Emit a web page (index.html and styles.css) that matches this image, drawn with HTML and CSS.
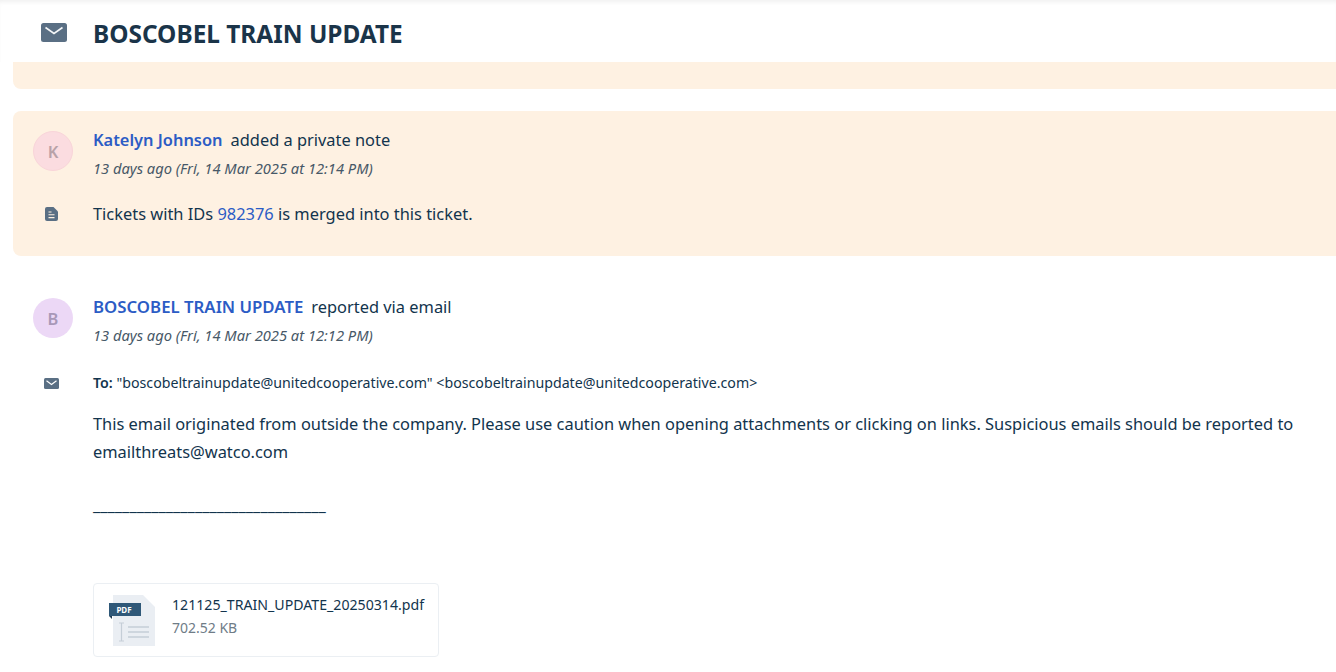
FILE: index.html
```html
<!DOCTYPE html>
<html lang="en">
<head>
<meta charset="utf-8">
<title>BOSCOBEL TRAIN UPDATE</title>
<link rel="stylesheet" href="styles.css">
</head>
<body>
<header class="head">
  <svg class="head-icon" width="26" height="19" viewBox="0 0 26 19"><rect width="26" height="19" rx="2.5" fill="#5a6f84"/><path d="M4.500 4.500 13 10.500l8.500-6" fill="none" stroke="#f4f6f8" stroke-width="1.600"/></svg>
  <h1 class="title">BOSCOBEL TRAIN UPDATE</h1>
</header>
<div class="stub"></div>
<section class="card note">
  <div class="row meta">
    <div class="gutter"><div class="avatar avatar-k">K</div></div>
    <div>
      <div class="who"><a class="name">Katelyn Johnson</a><span class="act">added a private note</span></div>
      <div class="time">13 days ago (Fri, 14 Mar 2025 at 12:14 PM)</div>
    </div>
  </div>
  <div class="row line-note">
    <div class="gutter"><svg class="small-icon" width="13" height="14" viewBox="0 0 13 14"><path d="M2 0H8.500L13 4.500V12a2 2 0 0 1-2 2H2a2 2 0 0 1-2-2V2a2 2 0 0 1 2-2z" fill="#5a6f84"/><path d="M3.500 5h3M3.500 7.800h6M3.500 10.600h6" stroke="#fef1e2" stroke-width="1.100"/></svg></div>
    <p class="text">Tickets with IDs <a class="link">982376</a> is merged into this ticket.</p>
  </div>
</section>
<section class="card mail">
  <div class="row meta">
    <div class="gutter"><div class="avatar avatar-b">B</div></div>
    <div>
      <div class="who"><a class="name name-caps">BOSCOBEL TRAIN UPDATE</a><span class="act">reported via email</span></div>
      <div class="time">13 days ago (Fri, 14 Mar 2025 at 12:12 PM)</div>
    </div>
  </div>
  <div class="row line-to">
    <div class="gutter"><svg class="small-icon" width="15" height="11" viewBox="0 0 15 11"><rect width="15" height="11" rx="1.500" fill="#5a6f84"/><path d="M2.500 2.800 7.500 6.500l5-3.700" fill="none" stroke="#fff" stroke-width="1.200"/></svg></div>
    <div class="to"><b>To:</b> "boscobeltrainupdate@unitedcooperative.com" &lt;boscobeltrainupdate@unitedcooperative.com&gt;</div>
  </div>
  <div class="body-text">
    <p class="text para">This email originated from outside the company. Please use caution when opening attachments or clicking on links. Suspicious emails should be reported to emailthreats@watco.com</p>
    <div class="rule">________________________________</div>
    <div class="file">
      <svg class="file-icon" width="46" height="51" viewBox="0 0 46 51"><path d="M4 0h30l12 12v39H4z" fill="#eaeef3"/><path d="M0 8h32v13H0z" fill="#2f5878"/><path d="M0 21h3v3z" fill="#1d3a52"/><text x="15" y="18" class="pdf">PDF</text><path d="M10 28h5M12.500 28v18M10 46h5" stroke="#c5ced7" stroke-width="1.200" fill="none"/><path d="M19 32h21M19 37h21M19 42h21" stroke="#c5ced7" stroke-width="1.300"/></svg>
      <div class="file-info">
        <div class="file-name">121125_TRAIN_UPDATE_20250314.pdf</div>
        <div class="file-size">702.52 KB</div>
      </div>
    </div>
  </div>
</section>
</body>
</html>
```
FILE: styles.css
```css
html, body { margin: 0; height: 100%; overflow: hidden; background: #fff; }
body { font-family: "Noto Sans", "Open Sans", sans-serif; color: #12344d; width: 1336px; height: 672px; }
.head { height: 62px; box-sizing: border-box; display: flex; align-items: center; padding: 4px 0 4px 41px; gap: 26px; box-shadow: inset 0 4px 4px -2px #f0f0f0; }
.head-icon { flex: none; margin-top: 2px; }
.title { margin: 0; font-size: 24.400px; font-weight: 700; color: #1a3449; line-height: 1; margin-top: 6px; }
.stub { margin-left: 13px; height: 27px; background: #fef1e2; border-radius: 0 0 0 8px; }
.card { margin-left: 13px; border-radius: 8px 0 0 8px; }
.note { margin-top: 22px; height: 145px; box-sizing: border-box; padding-top: 20px; background: #fef1e2; }
.mail { margin-top: 22px; padding-top: 20px; }
.row { display: flex; }
.gutter { width: 80px; flex: none; display: flex; justify-content: center; }
.small-icon { margin-right: 4px; }
.avatar { width: 40px; height: 40px; border-radius: 50%; box-sizing: border-box; display: flex; align-items: center; justify-content: center; font-size: 16.400px; font-weight: 600; padding-top: 1px; }
.avatar-k { background: #fbdce0; border: 1px solid #f9d5d9; color: #b8a2a8; }
.avatar-b { background: #ecd8f6; color: #a898b8; }
.who { font-size: 16.400px; line-height: 18px; display: flex; gap: 8px; }
.name { color: #2c5cc5; font-weight: 600; }
.name-caps { font-size: 16.800px; }
.act { color: #12344d; }
.time { font-size: 14.700px; font-style: italic; color: #475867; line-height: 18px; margin-top: 10px; }
.text { margin: 0; font-size: 16.420px; line-height: 27px; color: #12344d; }
.link { color: #2c5cc5; }
.line-note { margin-top: 23px; align-items: center; }
.line-to { margin-top: 30px; align-items: center; }
.to { font-size: 14.200px; color: #12344d; line-height: 18px; }
.to b { font-weight: 600; }
.body-text { margin-left: 80px; }
.para { margin-top: 18px; width: 1220px; line-height: 27.500px; }
.rule { font-size: 16.400px; line-height: 27px; margin-top: 26px; color: #12344d; }
.file { margin-top: 65px; width: 346px; height: 74px; box-sizing: border-box; border: 1px solid #ebeff3; border-radius: 4px; display: flex; align-items: center; gap: 17px; padding-left: 15px; }
.file-icon { flex: none; }
.file-info { padding-bottom: 8px; }
.pdf { font-size: 8px; font-weight: 700; fill: #fff; text-anchor: middle; font-family: "Noto Sans", sans-serif; }
.file-name { font-size: 14.150px; line-height: 20px; color: #12344d; }
.file-size { font-size: 14px; line-height: 20px; color: #6f7c87; margin-top: 3px; }
```
